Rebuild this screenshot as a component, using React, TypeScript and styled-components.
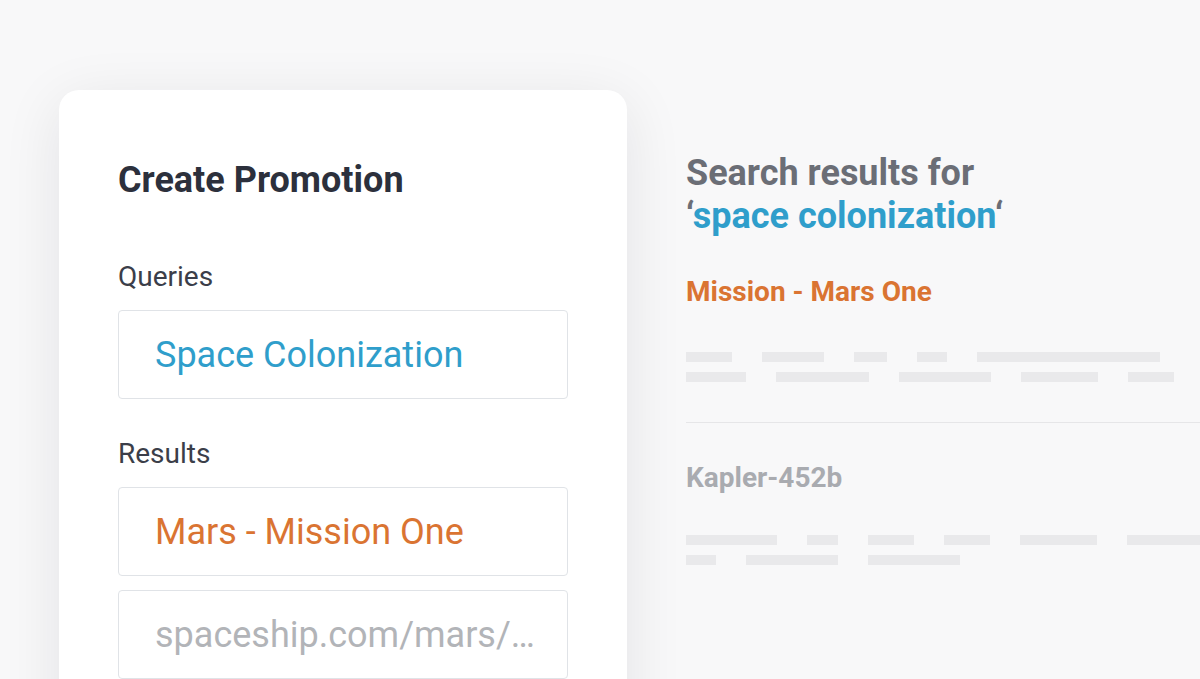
import React from "react";
import styled, { createGlobalStyle } from "styled-components";

const GlobalStyle = createGlobalStyle`
  html, body {
    margin: 0;
    padding: 0;
    background: #f8f8f9;
    font-family: Roboto, "Liberation Sans", sans-serif;
    overflow: hidden;
  }
`;

const Page = styled.div`
  display: flex;
  gap: 59px;
  padding: 90px 0 0 59px;
  height: 679px;
  box-sizing: border-box;
  overflow: hidden;
`;

const Card = styled.section`
  flex: 0 0 568px;
  box-sizing: border-box;
  min-height: 700px;
  padding: 70px 59px 0;
  background: #ffffff;
  border-radius: 20px;
  box-shadow: 0 12px 60px rgba(20, 20, 30, 0.09);
`;

const CardTitle = styled.h2`
  margin: 0;
  font-size: 36px;
  line-height: 40px;
  font-weight: 700;
  color: #2c303c;
`;

const FieldLabel = styled.div<{ $top: number }>`
  margin-top: ${(p) => p.$top}px;
  font-size: 28px;
  line-height: 30px;
  color: #3b3e49;
`;

const FieldBox = styled.div<{ $tone: "blue" | "orange" | "muted"; $top: number }>`
  display: flex;
  align-items: center;
  box-sizing: border-box;
  height: 89px;
  margin-top: ${(p) => p.$top}px;
  padding: 0 28px 0 36px;
  border: 1.5px solid #e0e3e7;
  border-radius: 4px;
  font-size: 36px;
  white-space: nowrap;
  overflow: hidden;
  color: ${(p) =>
    p.$tone === "blue" ? "#2f9ecb" : p.$tone === "orange" ? "#da7432" : "#b2b4b8"};
`;

const Results = styled.section`
  flex: 1;
  padding-top: 62px;
  min-width: 0;
`;

const ResultsHeading = styled.h1`
  margin: 0;
  font-size: 36px;
  line-height: 43px;
  font-weight: 700;
  color: #6b6e76;
`;

const Term = styled.span`
  color: #2f9ecb;
`;

const ResultItem = styled.div`
  padding-bottom: 40px;
  border-bottom: 1.5px solid #e6e6e8;

  &:last-child {
    border-bottom: none;
  }
`;

const ResultTitle = styled.div<{ $muted?: boolean; $top: number }>`
  margin-top: ${(p) => p.$top}px;
  font-size: 28px;
  line-height: 32px;
  font-weight: 700;
  color: ${(p) => (p.$muted ? "#a9abb0" : "#da7432")};
`;

const SkeletonBlock = styled.div<{ $top: number }>`
  display: flex;
  flex-direction: column;
  gap: 10px;
  margin-top: ${(p) => p.$top}px;
`;

const SkeletonRow = styled.div`
  display: flex;
  gap: 30px;
`;

const Bar = styled.span<{ $w: number }>`
  flex: 0 0 ${(p) => p.$w}px;
  height: 10px;
  background: #e9e9eb;
`;

const results = [
  {
    title: "Mission - Mars One",
    muted: false,
    top: 38,
    gap: 44,
    rows: [
      [46, 62, 33, 30, 183],
      [60, 93, 92, 77, 46],
    ],
  },
  {
    title: "Kapler-452b",
    muted: true,
    top: 39,
    gap: 41,
    rows: [
      [91, 31, 46, 46, 77, 90],
      [30, 92, 92],
    ],
  },
];

export default function App() {
  return (
    <>
      <GlobalStyle />
      <Page>
        <Card>
          <CardTitle>Create Promotion</CardTitle>
          <FieldLabel $top={62}>Queries</FieldLabel>
          <FieldBox $tone="blue" $top={18}>Space Colonization</FieldBox>
          <FieldLabel $top={40}>Results</FieldLabel>
          <FieldBox $tone="orange" $top={18}>Mars - Mission One</FieldBox>
          <FieldBox $tone="muted" $top={14}>spaceship.com/mars/…</FieldBox>
        </Card>
        <Results>
          <ResultsHeading>
            Search results for
            <br />
            ‘<Term>space colonization</Term>‘
          </ResultsHeading>
          {results.map((r) => (
            <ResultItem key={r.title}>
              <ResultTitle $muted={r.muted} $top={r.top}>
                {r.title}
              </ResultTitle>
              <SkeletonBlock $top={r.gap}>
                {r.rows.map((row, i) => (
                  <SkeletonRow key={i}>
                    {row.map((w, j) => (
                      <Bar key={j} $w={w} />
                    ))}
                  </SkeletonRow>
                ))}
              </SkeletonBlock>
            </ResultItem>
          ))}
        </Results>
      </Page>
    </>
  );
}
